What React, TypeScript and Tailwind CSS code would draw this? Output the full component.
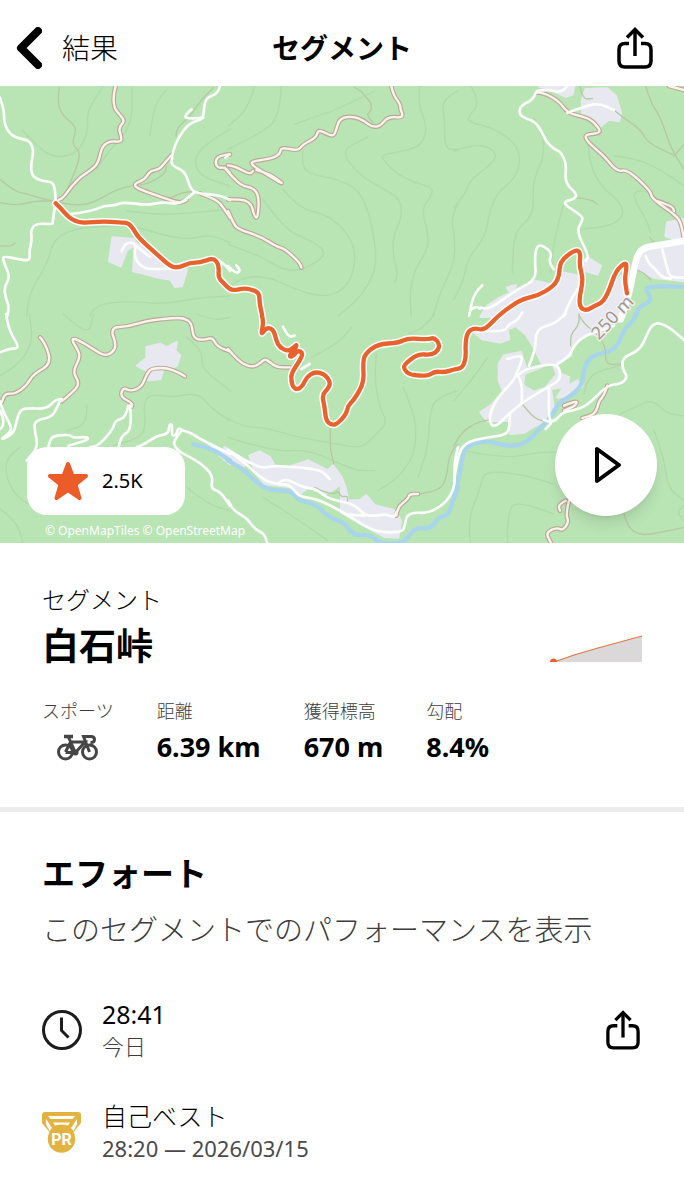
import React from 'react';

type Sheet = {
    x: number;
    y: number;
    areas: string[];
    clearings?: string[];
    water: string[];
    contours: string[];
    trails: string[];
    lanes: string[];
    roads: string[];
};

// The map is split into six sheets, each one with its own origin
const sheets: Sheet[] = [
    {
        x: 0,
        y: 0,
        areas: [
            '338,455 400,460 408,475 380,492 362,540 328,525',
            '406,470 440,490 520,548 560,552 545,600 525,602 512,580 480,575 400,555',
        ],
        water: [],
        contours: [
            '395,5 400,70 380,140 330,190 290,250',
            '80,690 85,620 140,540 160,460 220,430 300,420 400,420 500,450 570,460 630,445 690,470',
            '65,130 110,180 160,215 230,205 265,140 260,80 290,30 310,0',
            '380,375 460,386 560,382 690,370',
            '450,150 460,60 500,10',
            '270,690 280,655 400,645 480,655 600,635 690,630',
            '690,130 620,170 580,220 600,270 690,300',
        ],
        trails: [
            '178,5 172,45 185,85 215,110 230,130 215,175 240,195 235,230 215,280 200,315',
            '0,280 40,315 85,325 150,345 240,360 290,345 350,310 400,298 440,295 495,265 500,240',
            '0,350 50,360 100,345 165,345',
            '0,480 35,482 45,470',
            '640,5 600,45 575,85 550,108 530,130 528,150',
            '495,345 540,320 585,316',
        ],
        lanes: [
            '0,35 12,70 12,105 22,135 45,155 85,162 97,180 100,200 93,235 95,270 125,285 158,288 165,310 167,345',
            '167,345 158,410 157,415 110,412 92,430 96,460 88,495 90,520 75,524 12,510 8,520 25,560 27,580 12,605 18,640 27,660 22,690',
            '205,385 245,380 290,370 310,360 345,358 370,348 440,358 490,348 540,355 582,320',
            '660,0 655,22 620,35 612,60 610,100 575,108 550,132 525,175 515,215 515,240 555,255 570,305 585,320 625,325 665,330 690,342',
            '610,95 555,100 558,85 575,70',
            '365,495 372,478 390,468 408,475 402,510 420,540 450,550 520,548',
            '410,480 430,498 450,512',
            '650,520 675,535 690,555',
        ],
        roads: [
            '347,0 340,25 342,65 358,85 375,105 355,125 365,155 362,168 330,165 310,178 303,195 293,235 265,258 245,270 215,300 190,335 175,342',
            '515,207 490,235 478,250 450,255 435,280 405,292 405,302 425,312 480,332 540,352 560,342',
            '600,322 650,340 670,365 690,395',
            '690,205 655,208 645,230 655,247 675,243 690,262',
        ],
    },
    {
        x: 684,
        y: 0,
        areas: [],
        water: [],
        contours: [
            '160,0 155,95 100,140 0,190',
            '0,475 100,510 160,550 215,555 280,520 290,495 260,470 190,440 150,400 105,340',
            '225,195 220,240 250,265 330,280 390,310 420,370 440,460 445,540 420,600 380,650 330,690',
            '420,155 355,180 350,215 400,270 450,300 520,340 520,400 495,450 495,510 510,560 500,590',
            '575,0 570,60 595,110 590,160 560,190 465,205 460,215 500,260 560,290 615,305 610,330 580,370 600,440 600,490 560,550 545,620 550,690',
            '690,15 640,40 650,100 650,190 690,190',
            '690,355 668,390 680,450 680,530 640,610 615,690',
            '165,310 210,365 290,385 340,420 380,480 380,550 350,610 290,635 200,610 130,575 60,570 0,600',
            '440,15 330,70 280,85 200,115',
            '80,0 60,70 0,120',
        ],
        trails: ['380,5 400,15 410,30 430,50 430,75 415,85 435,110'],
        lanes: ['0,540 22,563 38,555 25,538', '-8,215 4,205'],
        roads: [
            '490,0 495,25 517,55 517,70 524,85 520,95 480,92 455,122 430,122 410,105 375,90 335,97 325,130 318,148 305,148 270,130 265,155 225,175 210,195 160,183 155,205 130,218 75,225 68,235 120,268 165,295 155,285 125,265 85,252',
            '0,238 20,240 65,265 75,255',
            '-10,245 0,258 40,300 75,305 93,330 90,395 80,395 67,342 0,340',
            '0,375 15,410 30,430 95,450 145,482 170,488 215,530 220,545',
        ],
    },
    {
        x: 1362,
        y: 0,
        areas: [
            '255,0 360,0 355,25 335,32 300,15',
            '395,10 460,8 485,30 500,80 495,105 465,100 440,120 415,95 385,85 385,40',
            '690,400 640,410 635,450 690,470',
            '400,515 440,540 430,565 395,555 385,530',
            '555,490 690,465 690,585 600,575 540,545',
            '160,605 185,598 180,615 165,615',
            '80,692 100,660 140,635 245,585 310,600 325,560 375,570 372,670 420,675 470,620 500,570 530,610 510,692',
        ],
        water: ['690,603 640,600 585,603 575,610 590,635 585,650 555,662 545,690'],
        contours: [
            '0,195 60,175 110,185 130,210 100,245 50,280 35,320 0,365',
            '50,0 80,50 40,95 50,110 130,130 190,180 200,230 180,280 130,320 105,380 95,450 40,520 30,580 0,640',
            '240,95 270,150 268,220 235,290 240,360 225,400 180,440 175,560',
            '330,350 300,460 290,560',
            '400,150 405,230 440,300 500,350 510,390 470,420 380,430',
            '480,210 540,215 620,250 690,300',
            '588,440 590,425 535,330 550,312 590,320',
        ],
        trails: [
            '575,0 590,50 620,95 645,170 665,210 690,250',
            '660,210 690,175',
            '480,72 500,90 560,130 580,170 660,208',
            '378,0 385,40 415,38',
            '365,335 410,340 430,355',
            '545,550 570,560 590,582',
            '600,470 588,455',
        ],
        lanes: [
            '245,20 240,40 200,58 195,85 215,97 245,108 265,140 275,165 300,190 320,197 338,235 332,290 370,325 360,340 335,345 330,355 385,390 385,405 367,435 405,510 395,525',
            '248,15 280,10 320,20 340,0',
            '340,80 395,60 435,52 480,72',
            '300,550 283,530 295,500 260,475 247,485 242,520 247,580 190,610 105,670 80,665',
            '85,598 60,620 45,690',
            '50,672 65,660 78,668',
            '370,610 345,650 330,690',
            '625,490 640,550 650,575 690,575',
            '575,510 585,535 600,545 625,575 650,578',
        ],
        roads: [
            '248,20 265,18 315,45 340,80 385,92 410,100 438,130 435,142 395,145 395,160 420,185 450,210 490,258 520,250 590,315 592,335 640,370 660,385 680,405 690,460',
            '610,345 655,360 660,375',
            '645,0 690,12',
        ],
    },
    {
        x: 0,
        y: 684,
        areas: [
            '412,155 440,132 440,100 480,90 500,100 530,85 525,110 540,125 530,155 490,165 480,195 445,198 440,170',
            '630,390 690,420 690,450 660,425',
        ],
        water: ['580,392 630,400 690,440'],
        contours: [
            '88,0 98,60 85,110 50,155 0,185',
            '190,0 240,45 270,50 280,0',
            '690,320 640,290 595,235 520,250 450,240 430,270 437,330 425,370 340,395',
            '60,400 15,430 20,500 60,560 150,600',
            '0,585 50,620 70,690',
            '560,520 620,570 690,590',
            '560,70 610,110 600,160 690,230',
            '260,270 265,330 200,350',
            '590,0 640,20 690,10',
        ],
        trails: [],
        lanes: [
            '18,0 25,45 55,95 50,103 25,105 0,115',
            '0,262 10,295 30,330 35,350 10,372 5,375 20,370 42,355 50,320 60,290 80,282 140,285 165,258 185,255',
            '180,260 165,295 150,310 105,320 103,345 115,400 80,440',
            '0,290 10,310 10,335 0,345',
            '145,400 150,375 165,365 210,362 220,372 262,368 265,378 205,395',
            '385,275 378,310 345,320 340,345 295,395 270,400',
            '390,275 397,345 365,365 355,400',
            '410,400 435,390 470,365 505,360 508,330 517,330 515,365 528,365 535,340 547,350 570,355 600,375 690,420',
            '545,350 520,380 525,400 550,420 600,445 640,485 632,525 660,532 690,575',
        ],
        roads: [
            '120,70 135,85 155,150 100,180 80,215 45,240 15,238 5,265',
            '185,262 225,230 238,205 218,175 240,130 235,110 213,75 230,75 280,105 310,125 335,118 350,95 330,40 385,38 440,20 520,12 550,12 575,25 580,75 615,78 637,70 652,98 690,112',
            '555,187 515,162 455,162 440,180 425,220 390,232 370,220 360,248 398,268 395,278',
        ],
    },
    {
        x: 684,
        y: 684,
        areas: [
            '65,425 95,413 125,430 140,455 180,460 240,440 300,470 315,455 340,490 352,520 360,560 395,560 415,545 440,575 500,590 518,620 510,670 470,668 400,630 340,595 340,510 310,530 290,540 240,520 215,540 200,520 110,510 80,470',
            '-10,400 60,445 50,455 -10,428',
        ],
        water: [
            '0,440 40,460 90,510 130,530 190,530 210,560 265,570 300,610 350,625 375,665 430,662 450,685 500,690 535,680 560,640 610,645 630,610 660,605 675,560 690,520',
        ],
        contours: [
            '0,315 50,340 110,340 210,370 300,385 380,400 410,395 450,355 478,325 455,280 440,200 445,120',
            '525,220 560,300 565,380 550,440 500,500 450,530',
            '0,370 140,415 240,405 380,470 440,470',
            '690,230 620,250 605,310 600,400 570,490',
            '105,550 200,610 300,680',
            '620,0 590,40 540,60',
            '250,130 330,90 370,40',
        ],
        trails: [
            '307,345 305,400 318,450',
            '690,390 665,410 655,500 630,530 570,540',
            '260,520 290,535 320,540 330,530 340,550 360,545 358,565',
        ],
        lanes: [
            '0,408 90,465 135,455 210,460 280,468 305,495',
            '0,410 50,445 100,495 150,512 180,510 200,530 215,548 270,555 355,600 400,630 450,655 520,655 530,640 535,605 560,595 600,598 650,570 682,520 678,450 690,400',
            '155,505 170,493 205,510 235,522 265,525 300,555 380,570 410,605 450,605 470,600 500,610 505,595',
            '355,602 410,605',
            '0,560 15,590 55,610 80,645 110,660 118,690',
            '165,38 180,70 200,65',
            '220,165 245,150',
        ],
        roads: [
            '0,105 30,140 60,157 85,157 110,135 120,140 145,160 185,160',
            '505,605 508,580 540,555 545,540 570,540',
        ],
    },
    {
        x: 1362,
        y: 684,
        areas: [
            '60,55 150,0 200,0 200,30 160,45 165,75 140,85 85,75',
            '210,0 510,0 470,30 430,65 400,55 355,95 350,125 310,150 265,150 240,100 215,60 190,40',
            '150,125 200,115 215,160 225,175 300,150 320,180 345,190 340,215 290,225 300,290 270,320 210,355 170,360 165,320 100,320 80,295 110,275 150,235 135,200 135,150',
            '370,200 385,215 350,245 310,250 325,225',
        ],
        clearings: ['218,185 290,155 300,180 270,215 240,225 215,210'],
        water: [
            '545,0 540,20 510,45 485,110 420,120 390,155 385,215 345,250 315,265 290,310 270,330 210,395 150,395 100,380 30,395 20,470 0,545',
        ],
        contours: [
            '500,155 430,170 400,200 390,240',
            '30,410 150,435 250,415 310,415',
            '50,690 40,620 80,520 90,470 200,480 300,510',
            '160,690 160,580 200,565 300,600',
            '500,300 560,270 600,260 640,300 690,305',
            '600,350 630,430 640,520 690,560',
            '0,260 60,190 100,130',
            '690,575 665,590 690,620',
        ],
        trails: [
            '0,395 20,355 70,325 105,318',
            '205,270 235,310 270,322',
            '375,0 378,30 350,60 350,95',
            '375,5 390,30 430,60 455,100 455,150 490,152 500,150',
            '510,600 520,640 560,665 620,655 690,640',
        ],
        lanes: [
            '0,500 10,430 32,385 100,370 140,365 165,355 168,300',
            '160,135 200,122 205,140 190,170 180,200 130,250 103,310 118,345 165,300',
            '190,180 205,210 203,265',
            '165,300 203,265 300,210 318,195 318,165 300,148 215,165 190,185',
            '310,150 345,130 360,95 390,65 480,35',
            '225,155 245,110 245,45 300,30 335,0',
            '285,225 283,310 295,325 275,345',
            '270,318 295,330 325,295 355,290 400,275 460,213 500,210 522,190 505,165 505,130 560,108 585,45 605,25 640,35 690,78',
            '95,50 150,55 165,30 190,20 205,-5',
        ],
        roads: [
            '460,215 450,245 435,260 425,300 385,312',
            '330,275 370,258 365,275 330,290',
            '345,560 335,600 345,625 325,650 310,640 275,655 290,685',
            '335,560 312,572 318,590',
        ],
    },
];

const highway = '2060,463 1962,480 1932,485 1912,505 1900,560 1892,600 1882,640 1862,700';

const route =
    '167,352 185,370 205,393 225,405 250,411 305,406 360,409 385,411 400,428 415,455 470,504 512,542 535,545 570,530 600,530 635,517 650,525 657,545 655,575 670,590 684,605 698,614 735,606 768,615 778,625 779,655 786,684 790,714 783,746 794,732 806,724 822,734 829,764 839,784 864,796 882,784 891,774 884,794 867,809 876,814 894,792 909,802 899,824 874,862 874,884 879,904 892,911 909,899 919,874 944,857 974,864 992,889 984,909 966,926 974,964 978,1004 996,1018 1014,1012 1039,984 1044,959 1064,939 1092,889 1089,834 1094,804 1134,774 1194,771 1224,756 1284,761 1302,754 1319,774 1314,794 1294,807 1254,804 1214,834 1211,849 1229,867 1284,870 1304,856 1334,859 1362,850 1388,846 1398,814 1396,774 1402,739 1422,726 1447,732 1467,719 1500,684 1562,640 1612,630 1662,600 1678,570 1680,525 1727,490 1742,500 1738,540 1750,580 1737,640 1742,668 1762,673 1782,660 1807,650 1827,615 1847,555 1877,528 1880,545 1874,580 1881,622';

// Rounds the corners of a list of points with quadratic curves
function smooth(points: string) {
    const p = points.split(' ').map((pair) => pair.split(',').map(Number));
    let d = `M${p[0][0]} ${p[0][1]}`;
    for (let i = 1; i < p.length - 1; i++) {
        const mx = (p[i][0] + p[i + 1][0]) / 2;
        const my = (p[i][1] + p[i + 1][1]) / 2;
        d += `Q${p[i][0]} ${p[i][1]} ${mx} ${my}`;
    }
    const last = p[p.length - 1];
    return `${d}L${last[0]} ${last[1]}`;
}

type LayerName = 'water' | 'contours' | 'trails' | 'lanes' | 'roads';

const Layer = ({ name, color, width }: { name: LayerName; color: string; width: number }) => (
    <g stroke={color} strokeWidth={width}>
        {sheets.map((sheet, i) => (
            <g key={i} transform={`translate(${sheet.x} ${sheet.y})`}>
                {sheet[name].map((line) => (
                    <path key={line} d={smooth(line)} />
                ))}
            </g>
        ))}
    </g>
);

const SegmentMap = () => (
    <svg
        viewBox="0 0 2052 1371"
        className="block h-auto w-full bg-[#b9e4b4]"
        fill="none"
        strokeLinecap="round"
        strokeLinejoin="round"
        role="img"
        aria-label="白石峠の地図"
    >
        {sheets.map((sheet, i) => (
            <g key={i} transform={`translate(${sheet.x} ${sheet.y})`} strokeWidth="8">
                {sheet.areas.map((area) => (
                    <polygon key={area} points={area} fill="#e8e8f0" stroke="#e8e8f0" />
                ))}
                {sheet.clearings?.map((area) => (
                    <polygon key={area} points={area} fill="#b9e4b4" stroke="#b9e4b4" />
                ))}
            </g>
        ))}
        <Layer name="contours" color="#afdaa9" width={4} />
        <Layer name="water" color="#a8d5ec" width={13} />
        <Layer name="trails" color="#b5c9a4" width={4} />
        <Layer name="roads" color="#bba89c" width={14} />
        <Layer name="lanes" color="#fbfefb" width={8} />
        <Layer name="roads" color="#fdf5ea" width={7} />
        <path d={smooth(highway)} stroke="#ffffff" strokeWidth="20" />

        <path d={smooth(route)} stroke="#ffffff" strokeWidth="22" />
        <path d={smooth(route)} stroke="#e8622d" strokeWidth="13" />

        <text
            transform="translate(1797 764) rotate(-47)"
            fontSize="54"
            fontFamily="Noto Sans, sans-serif"
            fill="#a3968f"
            stroke="#f4f2f4"
            strokeWidth="8"
            paintOrder="stroke"
        >
            250 m
        </text>
    </svg>
);

const ShareIcon = ({ className }: { className: string }) => (
    <svg viewBox="0 0 36 42" className={className} fill="none" stroke="currentColor" strokeWidth="3.500" strokeLinejoin="round">
        <path d="M12 16.500H8q-6 0-6 6V34q0 6 6 6h20q6 0 6-6V22.500q0-6-6-6h-4" />
        <path d="M18 29V3" />
        <path d="M10 10.500l8-8 8 8" strokeLinejoin="miter" />
    </svg>
);

const BikeIcon = () => (
    <svg viewBox="0 0 41 27" className="h-[27px] w-[41px] text-[#454545]" fill="none" stroke="currentColor" strokeWidth="3">
        <circle cx="8.5" cy="18" r="7" />
        <circle cx="32.5" cy="18" r="7" />
        <path d="M8.500 18L13.500 8H28L18.500 18.500H8.500M11.500 3l7 16M32.500 18L26.500 2.500H34q3.500 0 3.500 3t-4 3" />
        <path d="M7 2.500h9" strokeWidth="3.500" />
        <circle cx="18.500" cy="18.500" r="1.500" />
    </svg>
);

const ClockIcon = () => (
    <svg viewBox="1 1 40 40" className="h-10 w-10 text-[#1c1c1e]" fill="none" stroke="currentColor" strokeWidth="3">
        <circle cx="21" cy="21" r="18.500" />
        <path d="M20.500 8.500V21.500l7 7" />
    </svg>
);

const MedalIcon = () => (
    <svg viewBox="0 0 39 41" className="h-[41px] w-[39px]">
        <path d="M3 0h33q3 0 3 3v8L29 23H10L0 11V3q0-3 3-3z" fill="#e3b341" />
        <g fill="#ffffff">
            <path d="M6 4h27l-2.500 3h-22z" />
            <path d="M11 10.500h17l-2 3q-6.500-2-13 0z" />
            <path d="M4 7l6 9-2.500 3L4 12z" />
            <path d="M35 7l-6 9 2.500 3L35 12z" />
        </g>
        <circle cx="19.500" cy="27" r="13.700" fill="#e3b341" />
        <text x="19.500" y="32.500" textAnchor="middle" fontSize="16" fontWeight="700" fontFamily="Roboto, sans-serif" fill="#ffffff">
            PR
        </text>
    </svg>
);

const ElevationChart = () => (
    <svg viewBox="0 0 92 28" className="h-[28px] w-[92px]" role="img" aria-label="標高グラフ">
        <path d="M7 27L24 21 48 14 92 2V28H4z" fill="#dad8d8" />
        <path d="M7 27L24 21 48 14 92 2" fill="none" stroke="#e0773f" strokeWidth="1.200" />
        <path d="M0 28a3.500 3.500 0 0 1 7 0z" fill="#e8622d" />
    </svg>
);

const Stat = ({ label, children }: { label: string; children: React.ReactNode }) => (
    <div>
        <dt className="text-[18px] leading-7 font-light text-[#3c3c3c]">{label}</dt>
        <dd className="mt-1 flex h-9 items-center text-[27px] leading-9 font-bold">{children}</dd>
    </div>
);

const App: React.FC = () => {
    return (
        <div className="min-h-screen bg-white font-['Noto_Sans','Noto_Sans_CJK_JP',sans-serif] text-black">
            <header className="grid h-[86px] grid-cols-[1fr_auto_1fr] items-center px-4 pt-2.5">
                <button type="button" className="flex items-center gap-5 text-[28px] leading-10 font-light">
                    <svg viewBox="0 0 26 42" className="h-[42px] w-[26px]" fill="none" stroke="currentColor" strokeWidth="8" strokeLinecap="round" strokeLinejoin="round">
                        <path d="M22 4L5 21l17 17" />
                    </svg>
                    結果
                </button>
                <h1 className="text-[28px] leading-10 font-bold">セグメント</h1>
                <button type="button" aria-label="共有" className="mr-[15px] justify-self-end">
                    <ShareIcon className="h-[42px] w-[36px]" />
                </button>
            </header>

            <div className="relative">
                <SegmentMap />
                <button
                    type="button"
                    className="absolute bottom-7 left-[27px] flex h-[68px] w-[158px] items-center gap-3.5 rounded-[20px] bg-white pl-[21px] text-[20px]"
                >
                    <svg viewBox="0 0 40 40" className="h-10 w-10" fill="#ec5c29" stroke="#ec5c29" strokeWidth="4" strokeLinejoin="round">
                        <path d="M20 3l4.500 12H38L27.500 23.500 31.500 37 20 29 8.500 37l4-13.500L2 15h13.500z" />
                    </svg>
                    2.5K
                </button>
                <p className="absolute bottom-1 left-[45px] text-[12px] leading-4 text-white">© OpenMapTiles © OpenStreetMap</p>
                <button
                    type="button"
                    aria-label="再生"
                    className="absolute right-[27px] bottom-[27px] flex h-[102px] w-[102px] items-center justify-center rounded-full bg-white pl-1 shadow-lg"
                >
                    <svg viewBox="0 0 28 38" className="h-[38px] w-7" fill="none" stroke="currentColor" strokeWidth="4" strokeLinejoin="round">
                        <path d="M3 3v32l22-16z" />
                    </svg>
                </button>
            </div>

            {/* Resumo do segmento */}
            <section className="border-b-[5px] border-[#ebebeb] px-[42px] pt-[39px] pb-[42px]">
                <p className="text-[24px] leading-9 font-light">セグメント</p>
                <div className="mt-1 flex items-end justify-between">
                    <h2 className="text-[37px] leading-[48px] font-bold">白石峠</h2>
                    <div className="pb-2">
                        <ElevationChart />
                    </div>
                </div>
                <dl className="mt-[27px] flex gap-[43px]">
                    <Stat label="スポーツ">
                        <span className="flex w-full justify-center" role="img" aria-label="自転車">
                            <BikeIcon />
                        </span>
                    </Stat>
                    <Stat label="距離">6.39 km</Stat>
                    <Stat label="獲得標高">670 m</Stat>
                    <Stat label="勾配">8.4%</Stat>
                </dl>
            </section>

            {/* Esforços */}
            <section className="px-[42px] pt-[38px] pb-9">
                <h2 className="text-[33px] leading-[48px] font-bold">エフォート</h2>
                <p className="mt-3 text-[29px] leading-10 font-light text-[#3c3c3c]">このセグメントでのパフォーマンスを表示</p>

                <ul className="mt-12 flex flex-col gap-[38px]">
                    <li className="flex items-center gap-5">
                        <ClockIcon />
                        <div className="flex-1">
                            <p className="text-[25px] leading-8">28:41</p>
                            <p className="text-[22px] leading-8 font-light text-[#3c3c3c]">今日</p>
                        </div>
                        <button type="button" aria-label="共有" className="mr-0.5">
                            <ShareIcon className="h-10 w-[34px]" />
                        </button>
                    </li>
                    <li className="flex items-center gap-[21px]">
                        <MedalIcon />
                        <div className="flex-1">
                            <p className="text-[25px] leading-8 font-light">自己ベスト</p>
                            <p className="text-[22px] leading-8 text-[#4a4a4a]">28:20 — 2026/03/15</p>
                        </div>
                    </li>
                </ul>
            </section>
        </div>
    );
};

export default App;
